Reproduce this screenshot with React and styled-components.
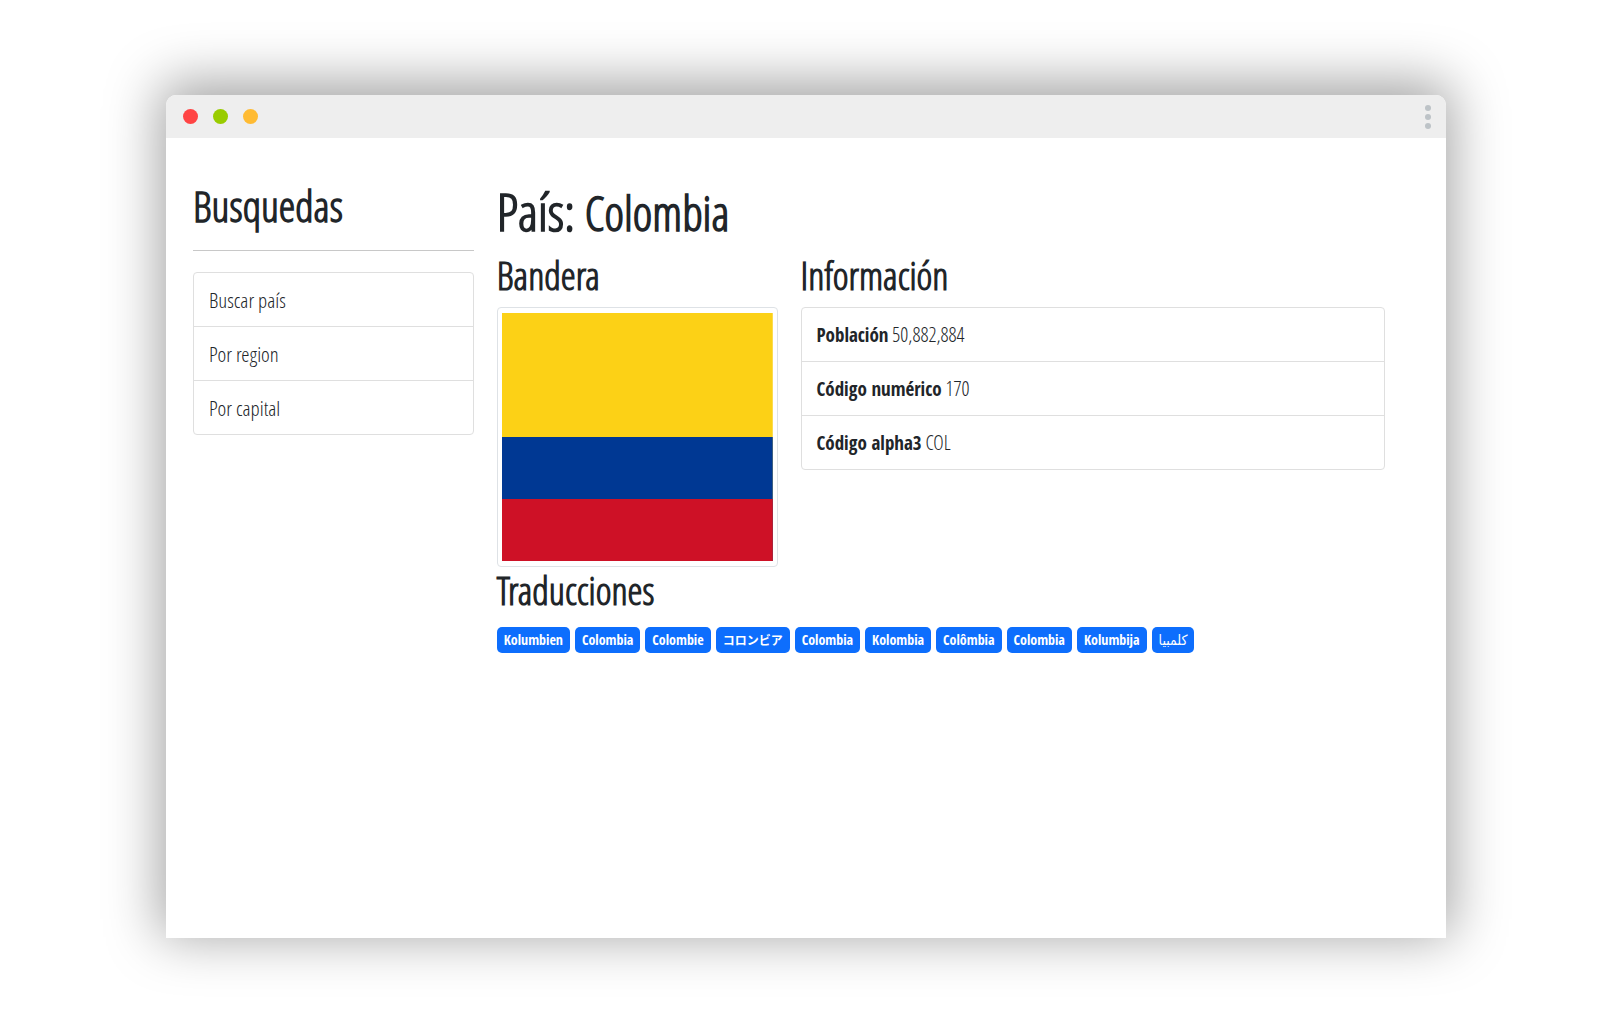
import React from 'react';
import styled, { createGlobalStyle } from 'styled-components';

const GlobalStyle = createGlobalStyle`
  *, *::before, *::after { box-sizing: border-box; }
  body {
    margin: 0;
    background: #fff;
    color: #212529;
    font-family: 'Open Sans Condensed Light', 'Open Sans Condensed', 'Roboto Condensed', sans-serif;
    font-size: 20px;
    line-height: 30px;
  }
`;

const Stage = styled.div`
  padding: 95px 165px 80px 166px;
`;

const Window = styled.div`
  min-height: calc(100vh - 175px);
  border-radius: 10px 10px 0 0;
  background: #fff;
  box-shadow: 0 -7px 54px 6px rgba(0, 0, 0, 0.36);
`;

const TitleBar = styled.header`
  display: flex;
  align-items: center;
  gap: 15px;
  height: 43px;
  padding: 0 15px 0 17px;
  border-radius: 10px 10px 0 0;
  background: #eee;
`;

const Dot = styled.span`
  width: 15px;
  height: 15px;
  border-radius: 50%;
  background: ${(p) => p.$color};
`;

const MenuButton = styled.button`
  display: flex;
  flex-direction: column;
  gap: 3px;
  margin-left: auto;
  padding: 0;
  border: 0;
  background: none;
`;

const MenuDot = styled.span`
  width: 6px;
  height: 6px;
  border-radius: 50%;
  background: #bdc3c7;
`;

const Grid = styled.div`
  display: grid;
  grid-template-columns: repeat(${(p) => p.$columns}, minmax(0, 1fr));
  column-gap: 23px;
`;

const Page = styled(Grid)`
  padding: 42px 61px 42px 27px;
`;

const Sidebar = styled.nav`
  grid-column: span 3;
`;

const Content = styled.main`
  grid-column: span 9;
`;

const Column = styled.section`
  grid-column: span ${(p) => p.$span};
`;

const SidebarTitle = styled.h2`
  margin: 0;
  font-size: 42px;
  line-height: 52px;
  font-weight: 700;
`;

const Divider = styled.hr`
  height: 1px;
  margin: 18px 0 21px;
  border: 0;
  background: #c8c8c8;
`;

const Title = styled.h1`
  margin: 0 0 10px;
  font-size: 52px;
  line-height: 62px;
  font-weight: 700;
`;

const CountryName = styled.span`
  font-size: 47px;
  line-height: 1;
`;

const SectionTitle = styled.h3`
  margin: 0 0 9px;
  font-size: 38px;
  line-height: 46px;
  font-weight: 700;
`;

const List = styled.ul`
  margin: 0;
  padding: 0;
  list-style: none;
  border: 1px solid #dfdfdf;
  border-radius: 4px;
`;

const Item = styled.li`
  padding: 12px 15px 11px;

  & + & {
    border-top: 1px solid #dfdfdf;
  }
`;

const ItemLink = styled.a`
  display: block;
  color: inherit;
  font-size: 21px;
  text-decoration: none;
`;

const Term = styled.strong`
  font-family: 'Open Sans Condensed', 'Roboto Condensed', sans-serif;
  font-size: 19px;
  font-weight: 700;
`;

const Thumbnail = styled.div`
  padding: 5px 4px;
  border: 1px solid #dee2e6;
  border-radius: 4px;
`;

const Flag = styled.svg`
  display: block;
  width: 100%;
  height: 248px;
`;

const Badges = styled.div`
  display: flex;
  flex-wrap: wrap;
  gap: 5px;
  padding-top: 5px;
`;

const Badge = styled.span`
  padding: 0 7px;
  border-radius: 5px;
  background: #0d6efd;
  color: #fff;
  font-family: 'Open Sans Condensed', 'DejaVu Sans Condensed', sans-serif;
  font-size: 14px;
  line-height: 26px;
  font-weight: 700;

  &:lang(ja) {
    font-family: 'Noto Sans CJK JP', sans-serif;
    font-size: 12px;
  }

  &:lang(fa) {
    font-family: 'DejaVu Sans Condensed', sans-serif;
    font-weight: 400;
  }
`;

const links = ['Buscar país', 'Por region', 'Por capital'];

const facts = [
  ['Población', '50,882,884'],
  ['Código numérico', '170'],
  ['Código alpha3', 'COL'],
];

const translations = [
  ['de', 'Kolumbien'],
  ['es', 'Colombia'],
  ['fr', 'Colombie'],
  ['ja', 'コロンビア'],
  ['it', 'Colombia'],
  ['br', 'Kolombia'],
  ['pt', 'Colômbia'],
  ['nl', 'Colombia'],
  ['hr', 'Kolumbija'],
  ['fa', 'کلمبیا'],
];

export default function App() {
  return (
    <Stage>
      <GlobalStyle />
      <Window>
        <TitleBar>
          <Dot $color="#ff4444" />
          <Dot $color="#99cc00" />
          <Dot $color="#ffbb33" />
          <MenuButton type="button" aria-label="Menú">
            <MenuDot />
            <MenuDot />
            <MenuDot />
          </MenuButton>
        </TitleBar>
        <Page $columns={12}>
          <Sidebar>
            <SidebarTitle>Busquedas</SidebarTitle>
            <Divider />
            <List>
              {links.map((label) => (
                <Item key={label}>
                  <ItemLink href="#">{label}</ItemLink>
                </Item>
              ))}
            </List>
          </Sidebar>
          <Content>
            <Title>
              País: <CountryName>Colombia</CountryName>
            </Title>
            <Grid $columns={3}>
              <Column $span={1}>
                <SectionTitle>Bandera</SectionTitle>
                <Thumbnail>
                  <Flag viewBox="0 0 4 4" preserveAspectRatio="none" role="img" aria-label="Colombia">
                    <rect width="4" height="4" fill="#fcd116" />
                    <rect y="2" width="4" height="2" fill="#003893" />
                    <rect y="3" width="4" height="1" fill="#ce1126" />
                  </Flag>
                </Thumbnail>
              </Column>
              <Column $span={2}>
                <SectionTitle>Información</SectionTitle>
                <List>
                  {facts.map(([term, value]) => (
                    <Item key={term}>
                      <Term>{term}</Term> {value}
                    </Item>
                  ))}
                </List>
              </Column>
            </Grid>
            <SectionTitle>Traducciones</SectionTitle>
            <Badges>
              {translations.map(([lang, name]) => (
                <Badge key={lang} lang={lang}>
                  {name}
                </Badge>
              ))}
            </Badges>
          </Content>
        </Page>
      </Window>
    </Stage>
  );
}
